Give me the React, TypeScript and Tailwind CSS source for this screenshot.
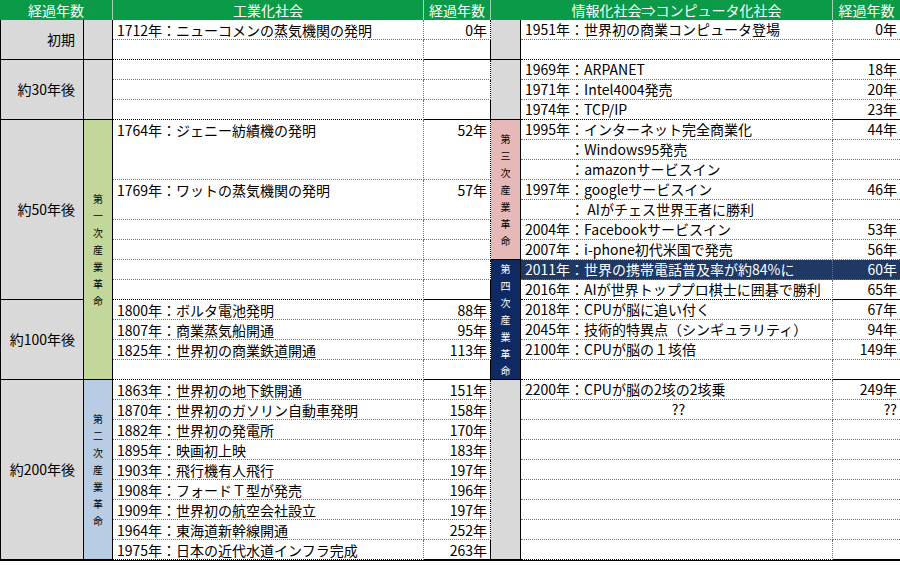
import React from "react";

const ROWS = ["row-start-2","row-start-3","row-start-4","row-start-5","row-start-6","row-start-7","row-start-8","row-start-9","row-start-10","row-start-11","row-start-12","row-start-13","row-start-14","row-start-15","row-start-16","row-start-17","row-start-18","row-start-19","row-start-20","row-start-21","row-start-22","row-start-23","row-start-24","row-start-25","row-start-26","row-start-27","row-start-28"];
const SPANS = ["row-span-1","row-span-1","row-span-2","row-span-3","row-span-4","row-span-5","row-span-6","row-span-7","row-span-8","row-span-9","row-span-10","row-span-11","row-span-12","row-span-13"];
const COLS = ["", "col-start-1","col-start-2","col-start-3","col-start-4","col-start-5","col-start-6","col-start-7"];
const RIGHT = ["", "border-r border-r-black", "border-r border-r-black", "border-r border-dotted border-r-gray-500", "border-r border-r-black", "border-r border-r-black", "border-r border-dotted border-r-gray-500", ""];
const ENDS = [1, 4, 13, 17, 26];

function Cell({ r, span = 1, col, cls = "", children }: { r: number; span?: number; col: number; cls?: string; children?: React.ReactNode }) {
  const last = r + span - 1;
  const bottom = ENDS.includes(last) ? "border-b border-b-black" : "border-b border-dotted border-b-gray-500";
  return (
    <div className={`${ROWS[r]} ${SPANS[span]} ${COLS[col]} ${RIGHT[col]} ${bottom} ${cls} flex items-center overflow-hidden whitespace-nowrap`}>
      {children}
    </div>
  );
}

type Ev = { r: number; span?: number; t: string; y?: string; hl?: boolean; center?: boolean };

const left: Ev[] = [
  { r: 0, t: "1712年：ニューコメンの蒸気機関の発明", y: "0年" },
  { r: 5, span: 3, t: "1764年：ジェニー紡績機の発明", y: "52年" },
  { r: 8, span: 2, t: "1769年：ワットの蒸気機関の発明", y: "57年" },
  { r: 14, t: "1800年：ボルタ電池発明", y: "88年" },
  { r: 15, t: "1807年：商業蒸気船開通", y: "95年" },
  { r: 16, t: "1825年：世界初の商業鉄道開通", y: "113年" },
  { r: 18, t: "1863年：世界初の地下鉄開通", y: "151年" },
  { r: 19, t: "1870年：世界初のガソリン自動車発明", y: "158年" },
  { r: 20, t: "1882年：世界初の発電所", y: "170年" },
  { r: 21, t: "1895年：映画初上映", y: "183年" },
  { r: 22, t: "1903年：飛行機有人飛行", y: "197年" },
  { r: 23, t: "1908年：フォードＴ型が発売", y: "196年" },
  { r: 24, t: "1909年：世界初の航空会社設立", y: "197年" },
  { r: 25, t: "1964年：東海道新幹線開通", y: "252年" },
  { r: 26, t: "1975年：日本の近代水道インフラ完成", y: "263年" },
];

const right: Ev[] = [
  { r: 0, t: "1951年：世界初の商業コンピュータ登場", y: "0年" },
  { r: 2, t: "1969年：ARPANET", y: "18年" },
  { r: 3, t: "1971年：Intel4004発売", y: "20年" },
  { r: 4, t: "1974年：TCP/IP", y: "23年" },
  { r: 5, t: "1995年：インターネット完全商業化", y: "44年" },
  { r: 6, t: "　　　  ：Windows95発売" },
  { r: 7, t: "　　　  ：amazonサービスイン" },
  { r: 8, t: "1997年：googleサービスイン", y: "46年" },
  { r: 9, t: "　　　  ：  AIがチェス世界王者に勝利" },
  { r: 10, t: "2004年：Facebookサービスイン", y: "53年" },
  { r: 11, t: "2007年：i-phone初代米国で発売", y: "56年" },
  { r: 12, t: "2011年：世界の携帯電話普及率が約84%に", y: "60年", hl: true },
  { r: 13, t: "2016年：AIが世界トッププロ棋士に囲碁で勝利", y: "65年" },
  { r: 14, t: "2018年：CPUが脳に追い付く", y: "67年" },
  { r: 15, t: "2045年：技術的特異点（シンギュラリティ）", y: "94年" },
  { r: 16, t: "2100年：CPUが脳の１垓倍", y: "149年" },
  { r: 18, t: "2200年：CPUが脳の2垓の2垓乗", y: "249年" },
  { r: 19, t: "??", y: "??", center: true },
];

function fill(evs: Ev[]): Ev[] {
  const used = new Set<number>();
  evs.forEach((e) => { for (let i = 0; i < (e.span ?? 1); i++) used.add(e.r + i); });
  const out = [...evs];
  for (let r = 0; r < 27; r++) if (!used.has(r)) out.push({ r, t: "" });
  return out;
}

function Vert({ text, cls }: { text: string; cls?: string }) {
  return (
    <div className={`flex w-full flex-col items-center gap-[5px] text-[10px] leading-[12px] ${cls ?? ""}`}>
      {text.split("").map((c, i) => <span key={i}>{c}</span>)}
    </div>
  );
}

export default function App() {
  const hd = "row-start-1 flex items-center justify-center bg-[#0b9a48] text-white border-r border-r-[#9fd4b0]";
  return (
    <div className="h-[565px] w-[900px] overflow-hidden bg-white text-[14px] text-black" style={{ fontFamily: '"Noto Sans CJK JP", "Noto Sans", sans-serif' }}>
      <div className="grid grid-cols-[84px_29px_311px_67px_30px_312px_67px] grid-rows-[repeat(28,20px)] border-b border-black">
        <div className={`${hd} col-start-1 col-span-2`}>経過年数</div>
        <div className={`${hd} col-start-3`}>工業化社会</div>
        <div className={`${hd} col-start-4`}>経過年数</div>
        <div className={`${hd} col-start-5 border-r-0`} />
        <div className={`${hd} col-start-6`}>情報化社会⇒コンピュータ化社会</div>
        <div className={`${hd} col-start-7 border-r-0`}>経過年数</div>

        <Cell r={0} span={2} col={1} cls="bg-[#d9d9d9] justify-end pr-2 border-l border-l-black">初期</Cell>
        <Cell r={2} span={3} col={1} cls="bg-[#d9d9d9] justify-end pr-2 border-l border-l-black">約30年後</Cell>
        <Cell r={5} span={9} col={1} cls="bg-[#d9d9d9] justify-end pr-2 border-l border-l-black">約50年後</Cell>
        <Cell r={14} span={4} col={1} cls="bg-[#d9d9d9] justify-end pr-2 border-l border-l-black">約100年後</Cell>
        <Cell r={18} span={9} col={1} cls="bg-[#d9d9d9] justify-end pr-2 border-l border-l-black">約200年後</Cell>

        <Cell r={0} span={2} col={2} cls="bg-[#d9d9d9]" />
        <Cell r={2} span={3} col={2} cls="bg-[#d9d9d9]" />
        <Cell r={5} span={13} col={2} cls="bg-[#c4d79b]"><Vert text="第一次産業革命" /></Cell>
        <Cell r={18} span={9} col={2} cls="bg-[#b8cce4]"><Vert text="第二次産業革命" /></Cell>

        <Cell r={0} span={2} col={5} cls="bg-[#d9d9d9]" />
        <Cell r={2} span={3} col={5} cls="bg-[#d9d9d9]" />
        <Cell r={5} span={7} col={5} cls="bg-[#e6b8b7] !border-b-black !border-solid"><Vert text="第三次産業革命" /></Cell>
        <Cell r={12} span={6} col={5} cls="bg-[#0f2a62] text-white"><Vert text="第四次産業革命" /></Cell>
        <Cell r={18} span={9} col={5} cls="bg-[#d9d9d9]" />

        {fill(left).map((e) => (
          <React.Fragment key={"l" + e.r}>
            <Cell r={e.r} span={e.span} col={3} cls="items-start pl-[4px] leading-[20px]">{e.t}</Cell>
            <Cell r={e.r} span={e.span} col={4} cls="items-start justify-end pr-[3px] leading-[20px]">{e.y}</Cell>
          </React.Fragment>
        ))}
        {fill(right).map((e) => (
          <React.Fragment key={"r" + e.r}>
            <Cell r={e.r} col={6} cls={`pl-[4px] ${e.center ? "justify-center" : ""} ${e.hl ? "bg-[#1f3864] text-white" : ""}`}>{e.t}</Cell>
            <Cell r={e.r} col={7} cls={`justify-end pr-[3px] ${e.hl ? "bg-[#1f3864] text-white" : ""}`}>{e.y}</Cell>
          </React.Fragment>
        ))}
      </div>
    </div>
  );
}
